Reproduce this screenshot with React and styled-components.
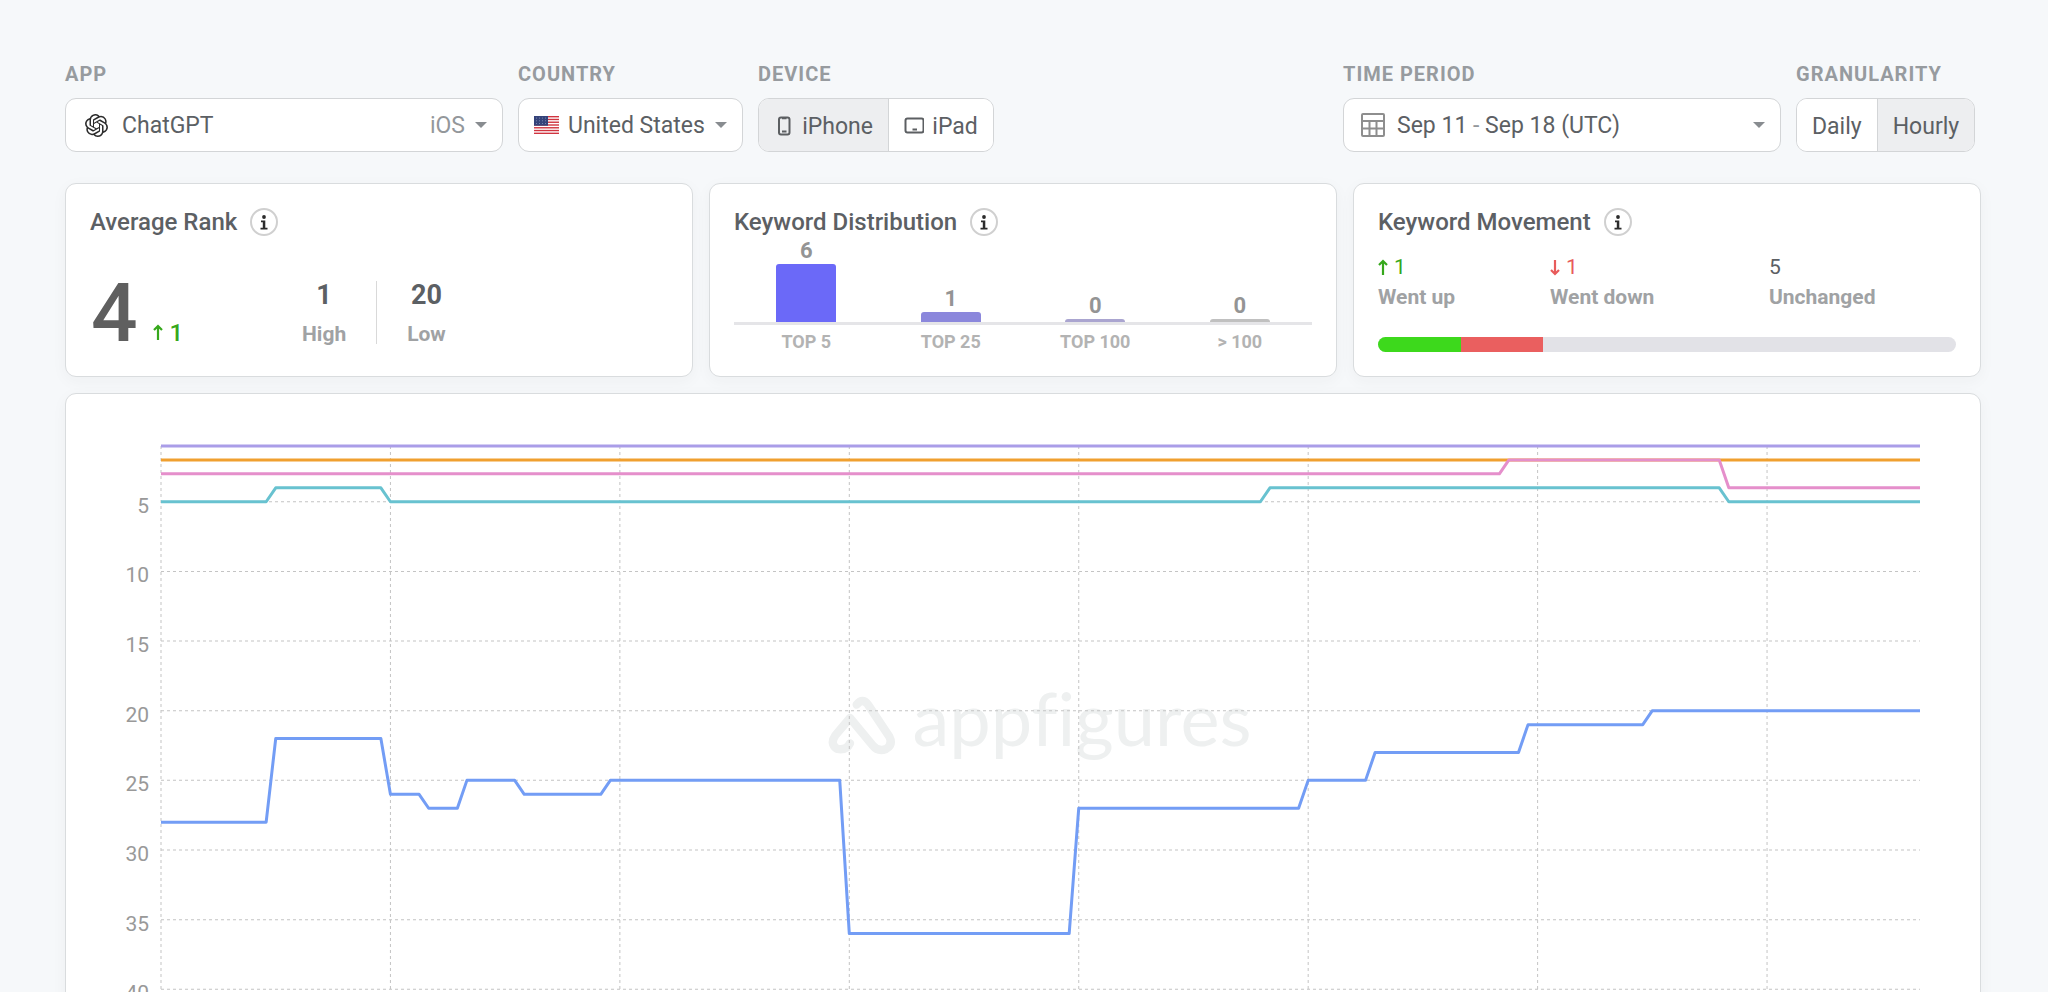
import React, { useState } from "react";
import styled, { createGlobalStyle } from "styled-components";
import { SiOpenai } from "react-icons/si";

const GlobalStyle = createGlobalStyle`
    * {
        box-sizing: border-box;
    }
    body {
        margin: 0;
        background: #f6f8fa;
        color: #5c6064;
        font-family: Roboto, "Liberation Sans", sans-serif;
        font-size: 23px;
    }
    button, select {
        font: inherit;
        color: inherit;
    }
`;

const Page = styled.main`
    height: 100vh;
    overflow: hidden;
    padding: 61px 67px 0 65px;
`;
const Toolbar = styled.div`
    display: flex;
    gap: 15px;
    margin: 0 6px 31px 0;
`;
const Field = styled.div`
    display: flex;
    flex-direction: column;
    gap: 11px;
    width: ${(props) => props.$width || "auto"};
    margin-left: ${(props) => (props.$pushed ? "auto" : "0")};
`;
const FieldLabel = styled.label`
    font-size: 20px;
    line-height: 26px;
    font-weight: 700;
    letter-spacing: 1px;
    color: #979b9f;
    text-transform: uppercase;
`;
const Control = styled.div`
    display: flex;
    align-items: center;
    gap: ${(props) => props.$gap || "12px"};
    width: 100%;
    height: 54px;
    padding: 0 15px 0 ${(props) => props.$left || "15px"};
    border: 1px solid #d3d5d7;
    border-radius: 11px;
    background: #fff;
    text-align: left;
    white-space: nowrap;
`;
const Select = styled.select`
    flex: 1;
    min-width: 0;
    padding: 0 0 0 ${(props) => props.$indent || "0"};
    border: none;
    background: none;
    appearance: none;
    outline: none;
`;
const Grow = styled.span`
    flex: 1;
`;
const Faded = styled.span`
    color: #93979b;
`;
const Segments = styled.div`
    display: flex;
    height: 54px;
    border: 1px solid #d3d5d7;
    border-radius: 11px;
    background: #fff;
    overflow: hidden;
`;
const Segment = styled.button`
    display: flex;
    flex: 1 1 auto;
    align-items: center;
    justify-content: center;
    gap: 8px;
    padding: 2px 15px 0;
    border: none;
    background: ${(props) => (props.$active ? "#edeef0" : "#fff")};
    & + & {
        border-left: 1px solid #d3d5d7;
    }
`;

const Cards = styled.div`
    display: grid;
    grid-template-columns: repeat(3, 1fr);
    gap: 16px;
    margin-bottom: 16px;
`;
const Card = styled.section`
    height: 194px;
    padding: 24px;
    border: 1px solid #d9dcde;
    border-radius: 11px;
    background: #fff;
    box-shadow: 0 4px 16px rgba(40, 50, 60, 0.04);
`;
const CardHeader = styled.div`
    display: flex;
    align-items: center;
    gap: 13px;
    height: 28px;
`;
const CardTitle = styled.h2`
    margin: 0;
    font-size: 24px;
    line-height: 28px;
    font-weight: 500;
`;
const InfoButton = styled.button`
    display: flex;
    align-items: center;
    justify-content: center;
    width: 28px;
    height: 28px;
    padding: 0;
    border: 2px solid #d0d0d0;
    border-radius: 50%;
    background: #fff;
`;

const RankRow = styled.div`
    display: flex;
    margin-top: 37px;
`;
const BigRank = styled.div`
    display: flex;
    align-items: baseline;
    gap: 14px;
    width: 182px;
    height: 80px;
    padding-left: 1px;
`;
const BigNumber = styled.span`
    font-size: 82px;
    line-height: 80px;
    font-weight: 500;
    color: #5f5f5f;
`;
const Change = styled.span`
    display: flex;
    align-items: center;
    gap: 6px;
    font-size: ${(props) => props.$size || "21px"};
    line-height: 24px;
    font-weight: ${(props) => (props.$strong ? 500 : 400)};
    color: ${(props) => props.$color || "inherit"};
`;
const Extreme = styled.div`
    height: 63px;
    padding: 0 30px;
    margin-top: 8px;
    text-align: center;
    & + & {
        border-left: 1px solid #d9d9d9;
    }
`;
const ExtremeValue = styled.div`
    font-size: 27px;
    line-height: 28px;
    font-weight: 700;
`;
const Caption = styled.div`
    font-size: 21px;
    line-height: 24px;
    font-weight: 700;
    color: #a0a2a4;
`;
const SpacedCaption = styled(Caption)`
    margin-top: 13px;
`;

const Bars = styled.div`
    display: grid;
    grid-template-columns: repeat(4, 1fr);
    height: 89px;
    border-bottom: 3px solid #e5e5e8;
`;
const BarColumn = styled.div`
    display: flex;
    flex-direction: column;
    align-items: center;
    justify-content: flex-end;
    font-size: 22px;
    line-height: 27px;
    font-weight: 700;
    color: #949494;
`;
const Bar = styled.div`
    width: 60px;
    border-radius: 3px 3px 0 0;
    background: ${(props) => props.$color};
`;
const BarLabels = styled.div`
    display: grid;
    grid-template-columns: repeat(4, 1fr);
    margin-top: 5px;
    text-align: center;
    font-size: 18px;
    line-height: 24px;
    font-weight: 700;
    color: #b3b3b3;
`;

const Movements = styled.div`
    display: grid;
    grid-template-columns: 172fr 219fr 187fr;
    row-gap: 6px;
    margin-top: 19px;
`;
const Progress = styled.div`
    display: flex;
    height: 15px;
    margin-top: 28px;
    border-radius: 8px;
    background: #e2e2e7;
    overflow: hidden;
`;
const ProgressPart = styled.div`
    background: ${(props) => props.$color};
`;

const ChartCard = styled(Card)`
    position: relative;
    display: grid;
    grid-template-columns: 95px 1fr;
    height: auto;
    padding: 52px 60px 60px 0;
`;
const Axis = styled.div`
    display: grid;
    grid-auto-rows: 1fr;
    align-items: center;
    height: 627px;
    margin-top: 25px;
    padding-right: 12px;
    text-align: right;
    font-size: 21px;
    line-height: 24px;
    color: #999;
`;
const Plot = styled.svg`
    position: relative;
    width: 100%;
    height: 613px;
    overflow: visible;
`;
const Watermark = styled.div`
    position: absolute;
    top: 284px;
    left: 0;
    right: 0;
    display: flex;
    align-items: center;
    justify-content: center;
    gap: 14px;
    padding-left: 32px;
    font-family: Lato, sans-serif;
    font-size: 74px;
    line-height: 80px;
    font-variant-ligatures: none;
    color: #eef0f0;
`;
const Logo = styled.svg`
    margin-top: 16px;
`;

const GREEN = "#36a81c";
const RED = "#e85b5b";

const BUCKETS = [
    { label: "TOP 5", value: 6, height: 58, color: "#6b69f8" },
    { label: "TOP 25", value: 1, height: 10, color: "#8b87dc" },
    { label: "TOP 100", value: 0, height: 3, color: "#aaa5d0" },
    { label: "> 100", value: 0, height: 3, color: "#c0c0c0" },
];

// [hour, rank] pairs
const HOURS = 184;
const MAX_RANK = 45;
const SERIES = [
    { color: "#aa9de8", points: [[0, 1], [184, 1]] },
    { color: "#f0a030", points: [[0, 2], [184, 2]] },
    { color: "#e58fcb", points: [[0, 3], [140, 3], [141, 2], [163, 2], [164, 4], [184, 4]] },
    {
        color: "#68c2d0",
        points: [[0, 5], [11, 5], [12, 4], [23, 4], [24, 5], [115, 5], [116, 4], [163, 4], [164, 5], [184, 5]],
    },
    {
        color: "#739df5",
        points: [
            [0, 28], [11, 28], [12, 22], [23, 22], [24, 26], [27, 26], [28, 27], [31, 27], [32, 25],
            [37, 25], [38, 26], [46, 26], [47, 25], [71, 25], [72, 36], [95, 36], [96, 27], [119, 27],
            [120, 25], [126, 25], [127, 23], [142, 23], [143, 21], [155, 21], [156, 20], [184, 20],
        ],
    },
];
const TICKS = [5, 10, 15, 20, 25, 30, 35, 40, 45];
const DAYS = [0, 24, 48, 72, 96, 120, 144, 168];

function Caret() {
    return (
        <svg width="12" height="6" viewBox="0 0 12 6" aria-hidden="true">
            <path d="M0 0h12L6 6z" fill="#888c90" />
        </svg>
    );
}

function Flag() {
    const stripes = [0, 1, 2, 3, 4, 5, 6];
    const stars = [3, 6, 9, 12];
    return (
        <svg width="25" height="18" viewBox="0 0 25 18" aria-hidden="true">
            <rect width="25" height="18" fill="#fff" />
            {stripes.map((i) => (
                <rect key={i} y={i * 2.77} width="25" height="1.39" fill="#d0343f" />
            ))}
            <rect width="14" height="9.7" fill="#34437a" />
            {stars.map((x) => [2, 4.8, 7.6].map((y) => (
                <circle key={x + "-" + y} cx={x - 0.5} cy={y} r="0.5" fill="#8d98bd" />
            )))}
        </svg>
    );
}

function PhoneIcon() {
    return (
        <svg width="20" height="20" viewBox="0 0 20 20" fill="none" stroke="#5c5f62" strokeWidth="2" aria-hidden="true">
            <rect x="5" y="1.5" width="10.5" height="17" rx="2" />
            <path d="M8 2.2h4.5M8 15.5h4.5" />
        </svg>
    );
}

function TabletIcon() {
    return (
        <svg width="20" height="20" viewBox="0 0 20 20" fill="none" stroke="#5c5f62" strokeWidth="2" aria-hidden="true">
            <rect x="1.5" y="2.5" width="18" height="14" rx="2" />
            <path d="M8.500 13.500h4.500" />
        </svg>
    );
}

function CalendarIcon() {
    return (
        <svg width="24" height="24" viewBox="0 0 24 24" fill="none" stroke="#8e8e8e" strokeWidth="2" aria-hidden="true">
            <rect x="1" y="1" width="22" height="22" rx="1" />
            <path d="M1 8h22M1 15.500h22M8.500 8v14M15.500 8v14" />
        </svg>
    );
}

function Arrow({ size, down }) {
    return (
        <svg width={size} height="17" viewBox="0 0 10 17" fill="none" stroke="currentColor" strokeWidth="2.2" aria-hidden="true">
            {down ? <path d="M5 1v14M1 11l4 4 4-4" /> : <path d="M5 16V2M1 6l4-4 4 4" />}
        </svg>
    );
}

function Info() {
    return (
        <InfoButton aria-label="More info">
            <svg width="8" height="15" viewBox="0 0 8 15" fill="#2b2b2b" aria-hidden="true">
                <circle cx="4" cy="2" r="1.900" />
                <path d="M1 5.500h4.300v7.300H7.500v1.700H.5v-1.700h2.300V7.200H1z" />
            </svg>
        </InfoButton>
    );
}

function Header({ title }) {
    return (
        <CardHeader>
            <CardTitle>{title}</CardTitle>
            <Info />
        </CardHeader>
    );
}

function Filters() {
    const [device, setDevice] = useState("iPhone");
    const [granularity, setGranularity] = useState("Hourly");
    return (
        <Toolbar>
            <Field $width="438px">
                <FieldLabel htmlFor="app">App</FieldLabel>
                <Control $gap="10px" $left="19px">
                    <SiOpenai size={23} color="#2b2b2b" />
                    <Select id="app" $indent="4px">
                        <option>ChatGPT</option>
                    </Select>
                    <Faded>iOS</Faded>
                    <Caret />
                </Control>
            </Field>
            <Field $width="225px">
                <FieldLabel htmlFor="country">Country</FieldLabel>
                <Control $gap="9px">
                    <Flag />
                    <Select id="country">
                        <option>United States</option>
                    </Select>
                    <Caret />
                </Control>
            </Field>
            <Field $width="236px">
                <FieldLabel as="span" id="device">Device</FieldLabel>
                <Segments role="group" aria-labelledby="device">
                    <Segment
                        $active={device === "iPhone"}
                        aria-pressed={device === "iPhone"}
                        onClick={() => setDevice("iPhone")}
                    >
                        <PhoneIcon />
                        iPhone
                    </Segment>
                    <Segment
                        $active={device === "iPad"}
                        aria-pressed={device === "iPad"}
                        onClick={() => setDevice("iPad")}
                    >
                        <TabletIcon />
                        iPad
                    </Segment>
                </Segments>
            </Field>
            <Field $width="438px" $pushed>
                <FieldLabel htmlFor="period">Time period</FieldLabel>
                <Control as="button" id="period" $left="17px">
                    <CalendarIcon />
                    <Grow>Sep 11 <Faded>-</Faded> Sep 18 (UTC)</Grow>
                    <Caret />
                </Control>
            </Field>
            <Field $width="179px">
                <FieldLabel as="span" id="granularity">Granularity</FieldLabel>
                <Segments role="group" aria-labelledby="granularity">
                    {["Daily", "Hourly"].map((name) => (
                        <Segment
                            key={name}
                            $active={granularity === name}
                            aria-pressed={granularity === name}
                            onClick={() => setGranularity(name)}
                        >
                            {name}
                        </Segment>
                    ))}
                </Segments>
            </Field>
        </Toolbar>
    );
}

function AverageRank() {
    return (
        <Card>
            <Header title="Average Rank" />
            <RankRow>
                <BigRank>
                    <BigNumber>4</BigNumber>
                    <Change $size="24px" $color={GREEN} $strong><Arrow size={12} />1</Change>
                </BigRank>
                <Extreme>
                    <ExtremeValue>1</ExtremeValue>
                    <SpacedCaption>High</SpacedCaption>
                </Extreme>
                <Extreme>
                    <ExtremeValue>20</ExtremeValue>
                    <SpacedCaption>Low</SpacedCaption>
                </Extreme>
            </RankRow>
        </Card>
    );
}

function Distribution() {
    return (
        <Card>
            <Header title="Keyword Distribution" />
            <Bars>
                {BUCKETS.map((b) => (
                    <BarColumn key={b.label}>
                        {b.value}
                        <Bar $color={b.color} style={{ height: b.height }} />
                    </BarColumn>
                ))}
            </Bars>
            <BarLabels>
                {BUCKETS.map((b) => <span key={b.label}>{b.label}</span>)}
            </BarLabels>
        </Card>
    );
}

function Movement() {
    const part = { width: 100 / 7 + "%" };
    return (
        <Card>
            <Header title="Keyword Movement" />
            <Movements>
                <Change $color={GREEN}><Arrow size={10} />1</Change>
                <Change $color={RED}><Arrow size={10} down />1</Change>
                <Change>5</Change>
                <Caption>Went up</Caption>
                <Caption>Went down</Caption>
                <Caption>Unchanged</Caption>
            </Movements>
            <Progress>
                <ProgressPart $color="#3dd91c" style={part} />
                <ProgressPart $color="#ea5f5f" style={part} />
            </Progress>
        </Card>
    );
}

function Chart() {
    return (
        <ChartCard>
            <Watermark>
                <Logo width="72" height="64" viewBox="78 72 216 192" fill="none" stroke="currentColor" strokeWidth="25" strokeLinecap="round" strokeLinejoin="round" aria-hidden="true">
                    <path d="M170 104Q188 82 204 104L268 200Q280 224 258 237Q234 246 218 226L150 144L106 196Q88 222 112 237Q140 242 150 220" />
                </Logo>
                appfigures
            </Watermark>
            <Axis>
                {TICKS.map((tick) => <span key={tick}>{tick}</span>)}
            </Axis>
            <Plot viewBox={`0 0 ${HOURS} ${MAX_RANK - 1}`} preserveAspectRatio="none">
                <g stroke="#c4c4c4" strokeWidth="1" strokeDasharray="3 3">
                    {TICKS.map((t) => (
                        <line key={t} x1="0" x2={HOURS} y1={t - 1} y2={t - 1} vectorEffect="non-scaling-stroke" />
                    ))}
                    {DAYS.map((d) => (
                        <line key={d} x1={d} x2={d} y1="0" y2={MAX_RANK - 1} vectorEffect="non-scaling-stroke" />
                    ))}
                </g>
                <g fill="none" strokeWidth="3" strokeLinejoin="round">
                    {SERIES.map((s) => (
                        <polyline
                            key={s.color}
                            stroke={s.color}
                            points={s.points.map(([hour, rank]) => `${hour},${rank - 1}`).join(" ")}
                            vectorEffect="non-scaling-stroke"
                        />
                    ))}
                </g>
            </Plot>
        </ChartCard>
    );
}

export default function App() {
    return (
        <Page>
            <GlobalStyle />
            <Filters />
            <Cards>
                <AverageRank />
                <Distribution />
                <Movement />
            </Cards>
            <Chart />
        </Page>
    );
}
